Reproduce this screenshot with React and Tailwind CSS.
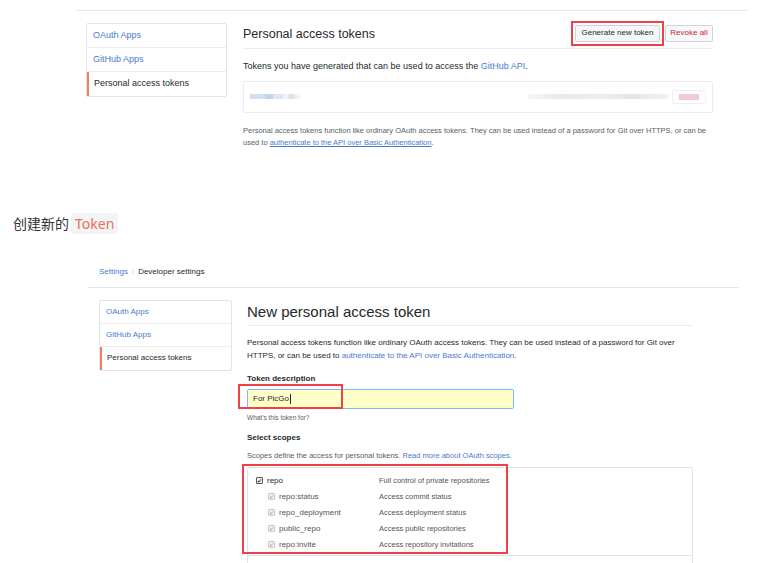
export default function App() {
  const scopes = [
    { name: "repo", desc: "Full control of private repositories", sub: false },
    { name: "repo:status", desc: "Access commit status", sub: true },
    { name: "repo_deployment", desc: "Access deployment status", sub: true },
    { name: "public_repo", desc: "Access public repositories", sub: true },
    { name: "repo:invite", desc: "Access repository invitations", sub: true },
  ];

  return (
    <div className="h-[563px] w-[757px] overflow-hidden bg-white font-['Liberation_Sans',Arial,sans-serif] text-[#333]">
      {/* first screenshot: token list */}
      <div className="h-[10px]" />
      <div className="ml-[76px] w-[671px] border-t border-[#e6e6e6]" />
      <div className="flex pl-[86px] pt-[12px]">
        <div className="w-[141px] self-start rounded-[2px] border border-[#e1e4e8] text-[9px]">
          <div className="flex h-[24px] items-center border-b border-[#eee] px-[6px] text-[#4a7ad0]">OAuth Apps</div>
          <div className="flex h-[24px] items-center border-b border-[#eee] px-[6px] text-[#4a7ad0]">GitHub Apps</div>
          <div className="flex h-[24px] items-center border-l-2 border-[#e8835a] px-[5px] text-[#24292e]">Personal access tokens</div>
        </div>
        <div className="ml-[16px] w-[470px]">
          <div className="flex h-[26px] items-center justify-between border-b border-[#eaecef]">
            <div className="-mt-[2px] text-[12.5px] text-[#24292e]">Personal access tokens</div>
            <div className="-mt-[5px] flex items-center">
              <div className="border-2 border-[#f0404a] p-[2px]">
                <div className="flex h-[17px] w-[85px] items-center justify-center rounded-[2px] border border-[#d1d5da] bg-[#f5f7f9] text-[8px] text-[#24292e]">
                  Generate new token
                </div>
              </div>
              <div className="ml-[1px] flex h-[17px] w-[48px] items-center justify-center rounded-[2px] border border-[#d1d5da] bg-[#f8f9fa] text-[8px] text-[#cb2431]">
                Revoke all
              </div>
            </div>
          </div>
          <div className="mt-[11px] text-[9px] text-[#24292e]">
            Tokens you have generated that can be used to access the <span className="text-[#4a7ad0]">GitHub API</span>.
          </div>
          <div className="mt-[7px] flex h-[32px] items-center justify-between rounded-[2px] border border-[#eaecef] px-[6px]">
            <div className="flex items-center">
              <div className="h-[5px] w-[15px] bg-[#d3e0f4]" />
              <div className="h-[5px] w-[8px] bg-[#c3d4f0]" />
              <div className="h-[5px] w-[10px] bg-[#dde6f5]" />
              <div className="h-[5px] w-[5px] bg-[#f1f1f1]" />
              <div className="h-[5px] w-[7px] bg-[#e4e4e4]" />
              <div className="h-[5px] w-[5px] bg-[#f3f3f3]" />
            </div>
            <div className="flex items-center">
              <div className="h-[5px] w-[140px] bg-[linear-gradient(90deg,#f6f6f6,#e8e8e8,#ededed,#e5e5e5,#f2f2f2)]" />
              <div className="ml-[4px] flex h-[14px] w-[34px] items-center justify-center rounded-[2px] border border-[#f0f0f0]">
                <div className="h-[6px] w-[20px] bg-[#efccd2]" />
              </div>
            </div>
          </div>
          <div className="mt-[12px] text-[7.5px] leading-[12px] text-[#586069]">
            <div>Personal access tokens function like ordinary OAuth access tokens. They can be used instead of a password for Git over HTTPS, or can be</div>
            <div>
              used to <span className="text-[#4a7ad0] underline">authenticate to the API over Basic Authentication</span>.
            </div>
          </div>
        </div>
      </div>

      {/* article text */}
      <div className="mt-[64px] flex items-center pl-[13px] font-['Noto_Sans','Noto_Sans_CJK_SC',sans-serif] text-[14px] text-[#333]">
        <span className="font-['Noto_Sans_CJK_SC',sans-serif]">创建新的</span>
        <span className="ml-[2px] rounded-[2px] bg-[#f3f4f4] px-[4px] text-[#ec6f60]">Token</span>
      </div>

      {/* second screenshot: new token form */}
      <div className="mt-[32px] pl-[99px] text-[8px]">
        <span className="text-[#4a7ad0]">Settings</span>
        <span className="mx-[4px] text-[#c6cbd1]">/</span>
        <span className="text-[#24292e]">Developer settings</span>
      </div>
      <div className="ml-[88px] mt-[9px] w-[651px] border-t border-[#e1e4e8]" />
      <div className="flex pl-[99px] pt-[12px]">
        <div className="w-[133px] self-start rounded-[2px] border border-[#e1e4e8] text-[8px]">
          <div className="flex h-[23px] items-center border-b border-[#eee] px-[6px] text-[#4a7ad0]">OAuth Apps</div>
          <div className="flex h-[23px] items-center border-b border-[#eee] px-[6px] text-[#4a7ad0]">GitHub Apps</div>
          <div className="flex h-[23px] items-center border-l-2 border-[#e8835a] px-[5px] text-[#24292e]">Personal access tokens</div>
        </div>
        <div className="ml-[15px] w-[446px]">
          <div className="h-[26px] border-b border-[#eaecef] text-[15px] leading-[24px] text-[#24292e]">New personal access token</div>
          <div className="mt-[10px] text-[8px] leading-[13px] text-[#24292e]">
            <div>Personal access tokens function like ordinary OAuth access tokens. They can be used instead of a password for Git over</div>
            <div>
              HTTPS, or can be used to <span className="text-[#4a7ad0]">authenticate to the API over Basic Authentication</span>.
            </div>
          </div>
          <div className="mt-[11px] text-[8px] font-bold text-[#24292e]">Token description</div>
          <div className="relative mt-[4px] w-[267px]">
            <div className="flex h-[20px] items-center rounded-[2px] border border-[#79b8ff] bg-[#ffffc8] px-[5px] text-[8px] text-[#24292e]">
              For PicGo<span className="ml-[1px] inline-block h-[10px] w-px bg-[#24292e]" />
            </div>
            <div className="absolute -left-[9px] -top-[5px] h-[25px] w-[105px] border-2 border-[#f0404a]" />
          </div>
          <div className="mt-[4px] text-[6.5px] text-[#586069]">What's this token for?</div>
          <div className="mt-[10px] text-[8px] font-bold text-[#24292e]">Select scopes</div>
          <div className="mt-[6px] text-[7.5px] text-[#586069]">
            Scopes define the access for personal tokens. <span className="text-[#4a7ad0]">Read more about OAuth scopes.</span>
          </div>
          <div className="relative mt-[5px] h-[110px] rounded-t-[2px] border border-[#e1e4e8]">
            <div className="pt-[5px]">
              {scopes.map((s) => (
                <div key={s.name} className="flex h-[16px] items-center text-[8px]">
                  <div className={s.sub ? "flex w-[131px] items-center pl-[20px]" : "flex w-[131px] items-center pl-[8px]"}>
                    <span
                      className={
                        s.sub
                          ? "flex h-[7px] w-[7px] items-center justify-center rounded-[1px] border border-[#c8c8c8] bg-[#f0f0f0] text-[6px] leading-none text-[#aaa]"
                          : "flex h-[7px] w-[7px] items-center justify-center rounded-[1px] border border-[#555] bg-[#f6f6f6] text-[6px] leading-none text-[#333]"
                      }
                    >
                      ✔
                    </span>
                    <span className={s.sub ? "ml-[4px] text-[#555]" : "ml-[4px] text-[#24292e]"}>{s.name}</span>
                  </div>
                  <div className="text-[7.5px] text-[#555]">{s.desc}</div>
                </div>
              ))}
            </div>
            <div className="absolute bottom-[20px] left-0 right-0 border-t border-[#e1e4e8]" />
            <div className="absolute -left-[6px] -top-[4px] h-[90px] w-[266px] border-2 border-[#f0404a]" />
          </div>
        </div>
      </div>
    </div>
  );
}
